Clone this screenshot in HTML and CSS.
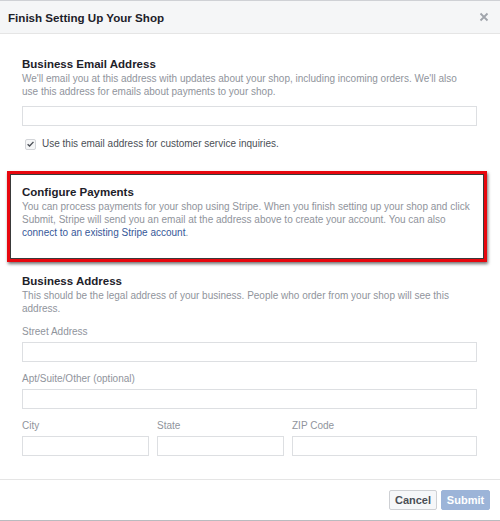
FILE: index.html
```html
<!DOCTYPE html>
<html>
<head>
<meta charset="utf-8">
<link rel="stylesheet" href="styles.css">
</head>
<body>
<div class="dialog">
  <div class="header">
    <span class="title">Finish Setting Up Your Shop</span>
    <svg class="close" width="10" height="10" viewBox="0 0 10 10"><path d="M1.5 1.5 L8.5 8.5 M8.5 1.5 L1.5 8.5" stroke="#a0a4ab" stroke-width="1.8" fill="none"/></svg>
  </div>
  <div class="content">
    <div class="section">
      <div class="heading">Business Email Address</div>
      <div class="desc">We'll email you at this address with updates about your shop, including incoming orders. We'll also use this address for emails about payments to your shop.</div>
      <div class="input email"></div>
      <label class="check">
        <span class="box"><svg width="10" height="10" viewBox="0 0 10 10"><path d="M1.8 5.2 L4 7.3 L8.3 2.6" stroke="#4b4f56" stroke-width="1.5" fill="none"/></svg></span>
        <span>Use this email address for customer service inquiries.</span>
      </label>
    </div>
    <div class="highlight">
      <div class="heading">Configure Payments</div>
      <div class="desc">You can process payments for your shop using Stripe. When you finish setting up your shop and click Submit, Stripe will send you an email at the address above to create your account. You can also <a class="link">connect to an existing Stripe account</a>.</div>
    </div>
    <div class="section addr">
      <div class="heading">Business Address</div>
      <div class="desc">This should be the legal address of your business. People who order from your shop will see this address.</div>
      <div class="field">
        <div class="label">Street Address</div>
        <div class="input"></div>
      </div>
      <div class="field">
        <div class="label">Apt/Suite/Other (optional)</div>
        <div class="input"></div>
      </div>
      <div class="row">
        <div class="field city">
          <div class="label">City</div>
          <div class="input"></div>
        </div>
        <div class="field state">
          <div class="label">State</div>
          <div class="input"></div>
        </div>
        <div class="field zip">
          <div class="label">ZIP Code</div>
          <div class="input"></div>
        </div>
      </div>
    </div>
  </div>
  <div class="footer">
    <button class="btn cancel">Cancel</button>
    <button class="btn submit">Submit</button>
  </div>
</div>
</body>
</html>
```
FILE: styles.css
```css
* { box-sizing: border-box; }
html, body { margin: 0; padding: 0; background: #fff; }
body {
  font-family: "Liberation Sans", Arial, Helvetica, sans-serif;
  color: #1d2129;
}
.dialog {
  width: 500px;
  height: 521px;
  display: flex;
  flex-direction: column;
  border-top: 1px solid #cfd1d5;
  border-bottom: 1px solid #b9bbbf;
}
.header {
  height: 33px;
  background: #f5f6f7;
  border-bottom: 1px solid #e5e5e5;
  display: flex;
  align-items: center;
  justify-content: space-between;
  padding: 0 11px 0 8px;
}
.title {
  font-size: 11.6px;
  font-weight: bold;
  color: #1d2129;
}
.close { display: block; }
.content {
  flex: 1;
  padding: 22px 23px 0 22px;
}
.heading {
  font-size: 11.5px;
  font-weight: bold;
  line-height: 16px;
  color: #1d2129;
}
.desc {
  font-size: 10px;
  line-height: 13px;
  color: #90949c;
}
.section .desc { max-width: 445px; }
.input {
  height: 20px;
  border: 1px solid #dddfe2;
  background: #fff;
}
.input.email { margin-top: 8px; }
.check {
  display: flex;
  align-items: center;
  gap: 6px;
  margin-top: 11px;
  margin-left: 3px;
  font-size: 10px;
  line-height: 14px;
  color: #4b4f56;
}
.box {
  width: 11px;
  height: 11px;
  border: 1px solid #d3d5d9;
  border-radius: 2px;
  display: flex;
  align-items: center;
  justify-content: center;
  background: #f5f6f7;
}
.box svg { display: block; }
.highlight {
  margin: 20px -10px 0 -15px;
  border: 3px solid #e8070e;
  box-shadow: inset 0 0 0 1px #3a3a3a, 1px 2px 3px rgba(0,0,0,0.55);
  padding: 10px 10px 20px 12px;
}
.link { color: #365899; text-decoration: none; }
.addr { margin-top: 11px; }
.field { margin-top: 10px; }
.label {
  font-size: 10px;
  line-height: 13px;
  color: #90949c;
  margin-bottom: 4px;
}
.row {
  display: flex;
  gap: 8px;
}
.city { width: 127px; }
.state { width: 127px; }
.zip { flex: 1; }
.footer {
  height: 41px;
  border-top: 1px solid #e5e5e5;
  display: flex;
  justify-content: flex-end;
  align-items: flex-start;
  padding: 10px 10px 0 0;
  gap: 4px;
}
.btn {
  height: 20px;
  font-family: "Liberation Sans", Arial, sans-serif;
  font-size: 11px;
  font-weight: bold;
  border-radius: 2px;
  padding: 0;
  line-height: 18px;
}
.cancel {
  width: 48px;
  background: #f6f7f9;
  border: 1px solid #ced0d4;
  color: #4b4f56;
}
.submit {
  width: 49px;
  background: #9cb4d8;
  border: 1px solid #9cb4d8;
  color: #fff;
}
```
